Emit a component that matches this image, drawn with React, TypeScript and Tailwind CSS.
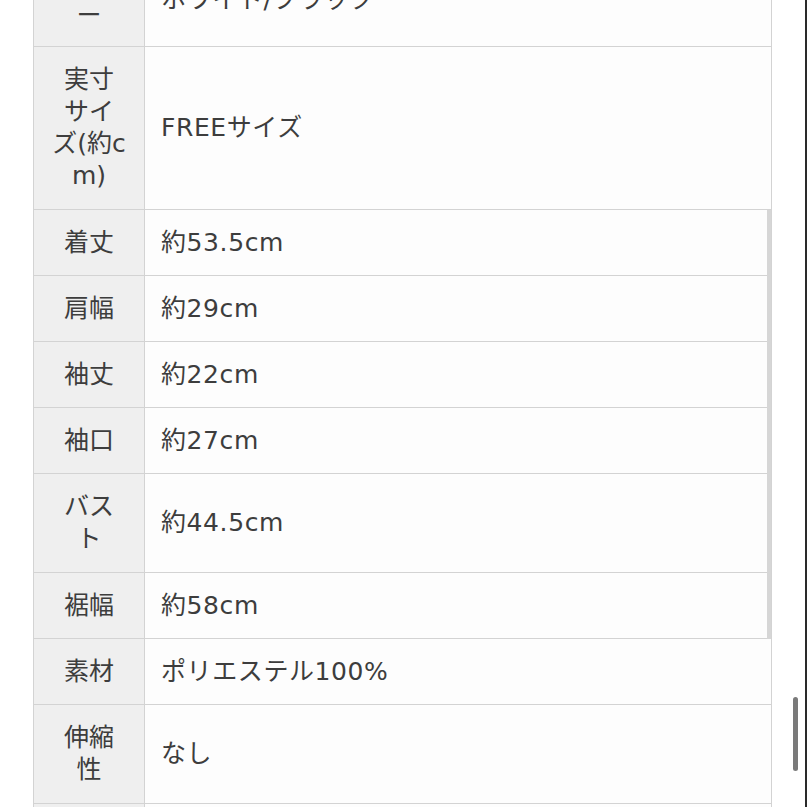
import type { ReactNode } from "react";

const font = {
  fontFamily:
    '"DejaVu Sans", "Noto Sans CJK JP", "Noto Sans", sans-serif',
};

function Row({
  label,
  children,
  pad = "py-[16.5px]",
}: {
  label: ReactNode;
  children: ReactNode;
  pad?: string;
}) {
  return (
    <div className="flex border-b border-[#d3d3d3]">
      <div
        className={`flex w-[111px] shrink-0 items-center justify-center border-r border-[#d3d3d3] bg-[#efefef] text-center ${pad}`}
      >
        {label}
      </div>
      <div
        className={`flex flex-1 items-center bg-[#fdfdfd] pl-4 tracking-[0.6px] ${pad}`}
      >
        {children}
      </div>
    </div>
  );
}

export default function App() {
  return (
    <div
      className="flex h-[807px] w-[807px] overflow-hidden bg-white text-[25px] leading-[32px] text-[#3d3d3d]"
      style={font}
    >
      <div className="w-[772px] shrink-0 pl-[33px]">
        <div className="mt-[-52px] border-x border-[#d3d3d3]">
          <Row label={<>カラ<br />ー</>} pad="pt-[20px] pb-[14px]">
            ホワイト/ブラック
          </Row>
          <Row label={<>実寸<br />サイ<br />ズ(約c<br />m)</>} pad="py-[17px]">
            FREEサイズ
          </Row>

          {/* measured rows sit in their own nested block */}
          <div className="border-r-4 border-[#d6d6d6]">
            <Row label="着丈">約53.5cm</Row>
            <Row label="肩幅">約29cm</Row>
            <Row label="袖丈">約22cm</Row>
            <Row label="袖口">約27cm</Row>
            <Row label={<>バス<br />ト</>} pad="py-[17px]">
              約44.5cm
            </Row>
            <Row label="裾幅">約58cm</Row>
          </div>

          <Row label="素材">ポリエステル100%</Row>
          <Row label={<>伸縮<br />性</>} pad="py-[17px]">
            なし
          </Row>
          <Row label="生地">薄手</Row>
        </div>
      </div>

      <div className="relative flex-1 bg-white">
        <div className="absolute left-[21px] top-[697px] h-[74px] w-[5px] rounded-full bg-[#7a7a7a]" />
      </div>
      <div className="w-[2px] shrink-0 bg-[#2a2a2a]" />
    </div>
  );
}
